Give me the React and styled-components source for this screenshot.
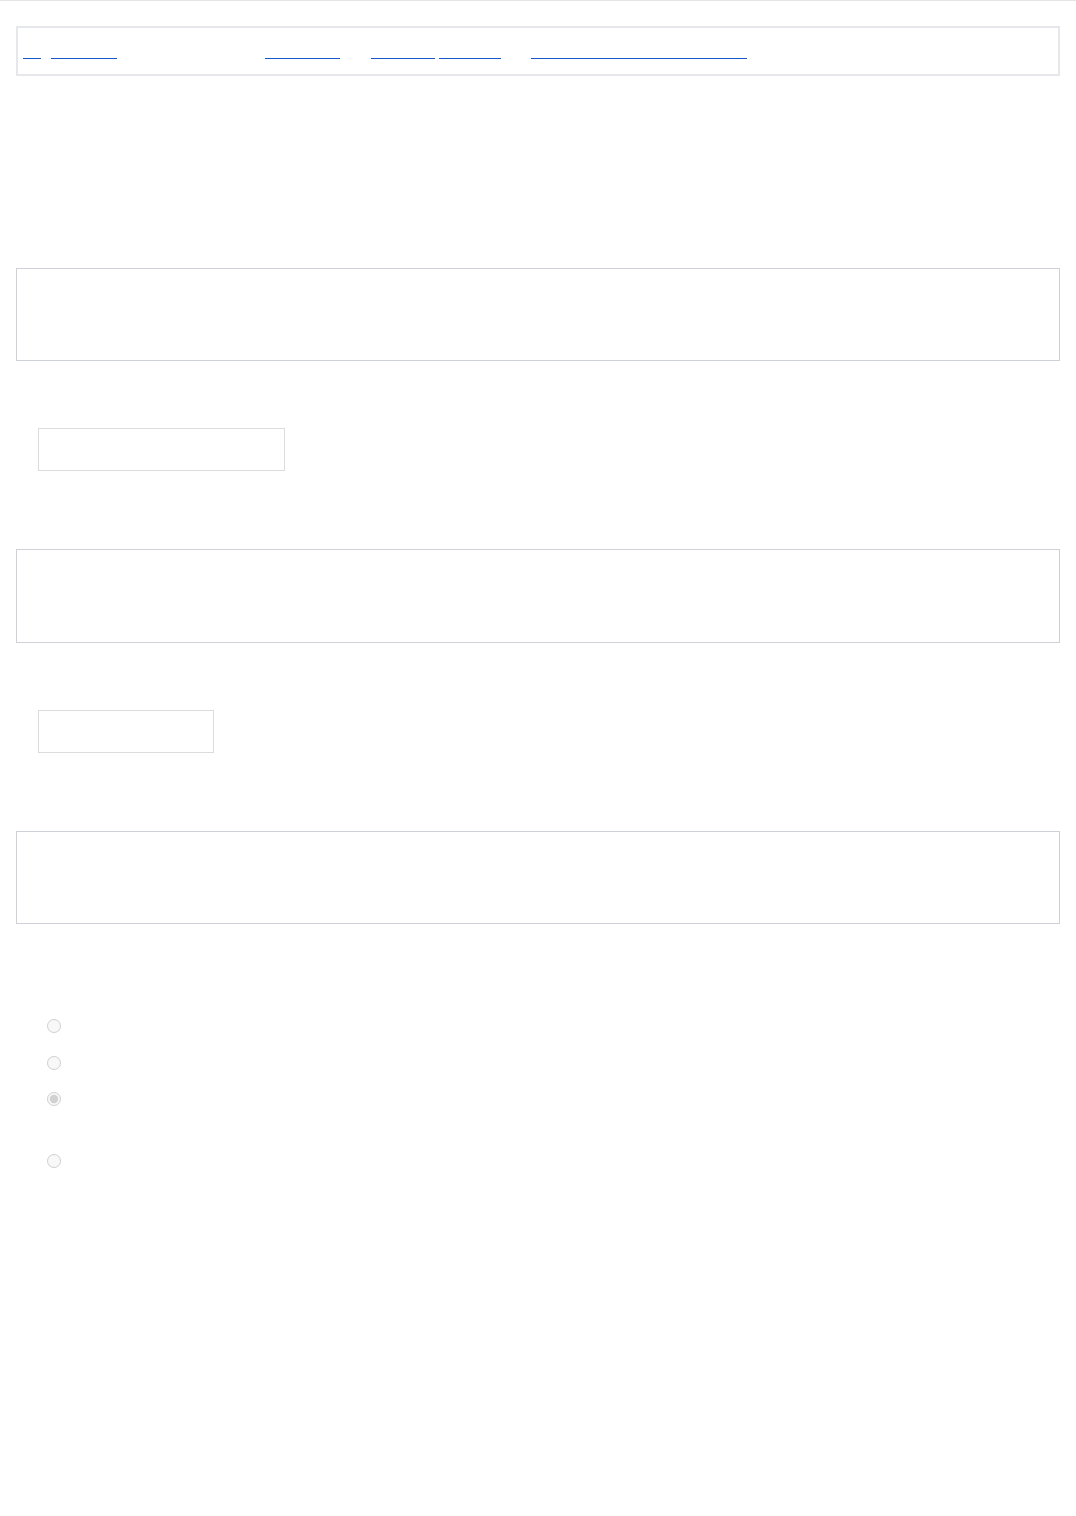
import React from 'react';
import styled, { createGlobalStyle } from 'styled-components';

const GlobalStyle = createGlobalStyle`
    html, body {
        margin: 0;
        padding: 0;
        background: #ffffff;
    }

    body {
        font-family: "Liberation Sans", Arial, sans-serif;
        font-size: 14px;
        color: #ffffff;
    }
`;

const Page = styled.div`
    border-top: 1px solid #e6e4e5;
    padding: 25px 16px 120px;
    min-height: 1516px;
    box-sizing: border-box;
`;

const Nav = styled.nav`
    display: flex;
    align-items: flex-start;
    height: 50px;
    box-sizing: border-box;
    border: 2px solid #e6e7ea;
    padding: 10px 5px 0;
`;

// link text is invisible in the shot, only the blue underline shows
const NavLink = styled.a`
    display: inline-block;
    width: ${p => p.$w}px;
    margin-left: ${p => p.$gap || 0}px;
    line-height: 20px;
    height: 20px;
    overflow: hidden;
    white-space: nowrap;
    color: transparent;
    text-decoration: none;
    border-bottom: 1px solid #1558c8;
`;

const NavText = styled.span`
    display: inline-block;
    width: ${p => p.$w}px;
    line-height: 20px;
    overflow: hidden;
    white-space: nowrap;
    color: transparent;
`;

const Intro = styled.header`
    padding: 56px 0 54px;

    & > h1 {
        margin: 0;
        font-size: 28px;
        line-height: 36px;
        font-weight: 700;
    }

    & > p {
        margin: 24px 0 0;
        line-height: 22px;
    }
`;

const Form = styled.form`
    display: flex;
    flex-direction: column;
`;

const TextBox = styled.textarea`
    display: block;
    width: 100%;
    height: ${p => p.$h || 93}px;
    box-sizing: border-box;
    border: 1px solid #cfd1d9;
    border-radius: 0;
    background: #ffffff;
    resize: none;
    outline: none;
    color: #ffffff;
    font: inherit;
    padding: 8px;
`;

const Label = styled.label`
    display: block;
    line-height: 20px;
    height: 20px;
    padding: ${p => p.$top}px 0 ${p => p.$bottom}px;
    color: #ffffff;
`;

const Field = styled.input`
    display: block;
    width: ${p => p.$w}px;
    height: ${p => p.$h}px;
    margin-left: 22px;
    box-sizing: border-box;
    border: 1px solid #dcdcdc;
    border-radius: 0;
    background: #ffffff;
    outline: none;
    color: #ffffff;
    font: inherit;
    padding: 0 10px;
`;

const Legend = styled.div`
    line-height: 21px;
    padding: 39px 0 24px;
    color: #ffffff;
`;

const Options = styled.div`
    display: flex;
    flex-direction: column;
    padding-left: 31px;
`;

const Option = styled.label`
    display: flex;
    align-items: flex-start;
    gap: 10px;
    padding: 8px 0 8.5px;
    line-height: 20px;
    color: #ffffff;

    & > input {
        margin: 3px 0 0;
        width: 14px;
        height: 14px;
        flex: none;
    }

    & small {
        display: block;
        font-size: 13px;
        line-height: 24px;
        margin-top: 1px;
    }
`;

const App = () => {
    return (
        <>
            <GlobalStyle />
            <Page>

                {/* top navigation, only the link underlines are visible */}
                <Nav>
                    <NavLink href="#" $w={18}>Go</NavLink>
                    <NavLink href="#" $w={66} $gap={10}>Resources</NavLink>
                    <NavText $w={148}>Signed in as guest</NavText>
                    <NavLink href="#" $w={75}>Community</NavLink>
                    <NavLink href="#" $w={64} $gap={31}>Settings</NavLink>
                    <NavLink href="#" $w={62} $gap={4}>Sign out</NavLink>
                    <NavLink href="#" $w={216} $gap={30}>Accessibility and privacy notice</NavLink>
                </Nav>

                <Intro>
                    <h1>Feedback form</h1>
                    <p>Please answer the questions below.</p>
                </Intro>

                <Form>
                    <TextBox $h={93} aria-label="Comments" />

                    <Label $top={24} $bottom={23}>Your name</Label>
                    <Field type="text" $w={247} $h={43} />

                    <Label $top={29} $bottom={29}>Describe the problem</Label>
                    <TextBox $h={94} />

                    <Label $top={24} $bottom={23}>Postcode</Label>
                    <Field type="text" $w={176} $h={43} />

                    <Label $top={29} $bottom={29}>Anything else</Label>
                    <TextBox $h={93} />

                    <Legend>How satisfied are you?</Legend>
                    <Options>
                        <Option><input type="radio" name="rating" disabled /> Very satisfied</Option>
                        <Option><input type="radio" name="rating" disabled /> Satisfied</Option>
                        <Option>
                            <input type="radio" name="rating" disabled defaultChecked />
                            <span>Neither satisfied nor dissatisfied<small>Selected by default</small></span>
                        </Option>
                        <Option><input type="radio" name="rating" disabled /> Dissatisfied</Option>
                    </Options>
                </Form>

            </Page>
        </>
    );
};

export default App;
